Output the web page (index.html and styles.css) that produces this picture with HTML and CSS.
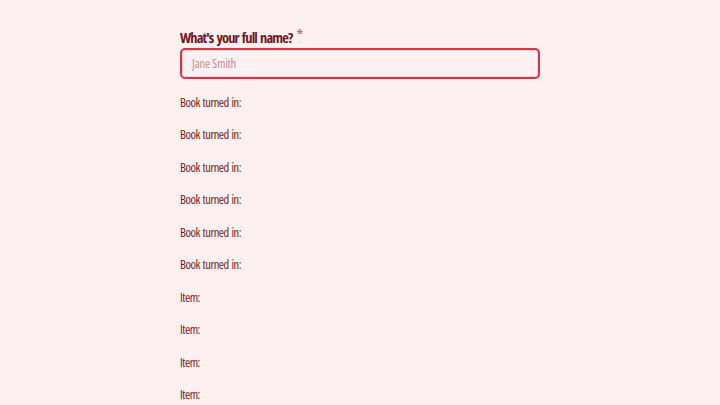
FILE: index.html
```html
<!DOCTYPE html>
<html>
<head>
<meta charset="utf-8">
<link rel="stylesheet" href="styles.css">
</head>
<body>
<form class="form">
  <div class="field">
    <label class="label" for="name">What's your full name? <span class="req">*</span></label>
    <input class="input" id="name" type="text" placeholder="Jane Smith">
  </div>
  <div class="rows">
    <div class="row">Book turned in:</div>
    <div class="row">Book turned in:</div>
    <div class="row">Book turned in:</div>
    <div class="row">Book turned in:</div>
    <div class="row">Book turned in:</div>
    <div class="row">Book turned in:</div>
    <div class="row">Item:</div>
    <div class="row">Item:</div>
    <div class="row">Item:</div>
    <div class="row">Item:</div>
  </div>
</form>
</body>
</html>
```
FILE: styles.css
```css
html, body {
  margin: 0;
  padding: 0;
  background: #fcf0f1;
  overflow: hidden;
}
body {
  font-family: "Open Sans", "Roboto Condensed", sans-serif;
  font-stretch: 75%;
  color: #7a1c25;
}
.form {
  width: 360px;
  margin: 0 auto;
  padding-top: 29px;
}
.field {
  display: flex;
  flex-direction: column;
  gap: 1px;
}
.label {
  font-size: 14.5px;
  font-weight: 700;
  letter-spacing: -0.9px;
  word-spacing: 1.5px;
  line-height: 18px;
  color: #731822;
}
.req {
  color: #c25763;
  font-weight: 400;
  font-size: 17px;
  letter-spacing: 0;
  vertical-align: top;
  position: relative;
  top: -3px;
  margin-left: 1px;
}
.input {
  box-sizing: border-box;
  height: 31px;
  width: 360px;
  border: 2px solid #d9344a;
  border-radius: 5px;
  background: #fdf1f2;
  box-shadow: inset 0 0 0 1px #f0d3d3;
  padding: 0 10px;
  font-family: inherit;
  font-stretch: 75%;
  font-weight: 500;
  font-size: 12.5px;
  letter-spacing: -0.2px;
  color: #731822;
  outline: none;
}
.input::placeholder {
  color: #c39097;
}
.rows {
  padding-top: 7px;
}
.row {
  height: 32.5px;
  display: flex;
  align-items: center;
  font-size: 12.5px;
  font-weight: 500;
  letter-spacing: -0.5px;
  word-spacing: 1px;
  color: #7a1c25;
}
```
